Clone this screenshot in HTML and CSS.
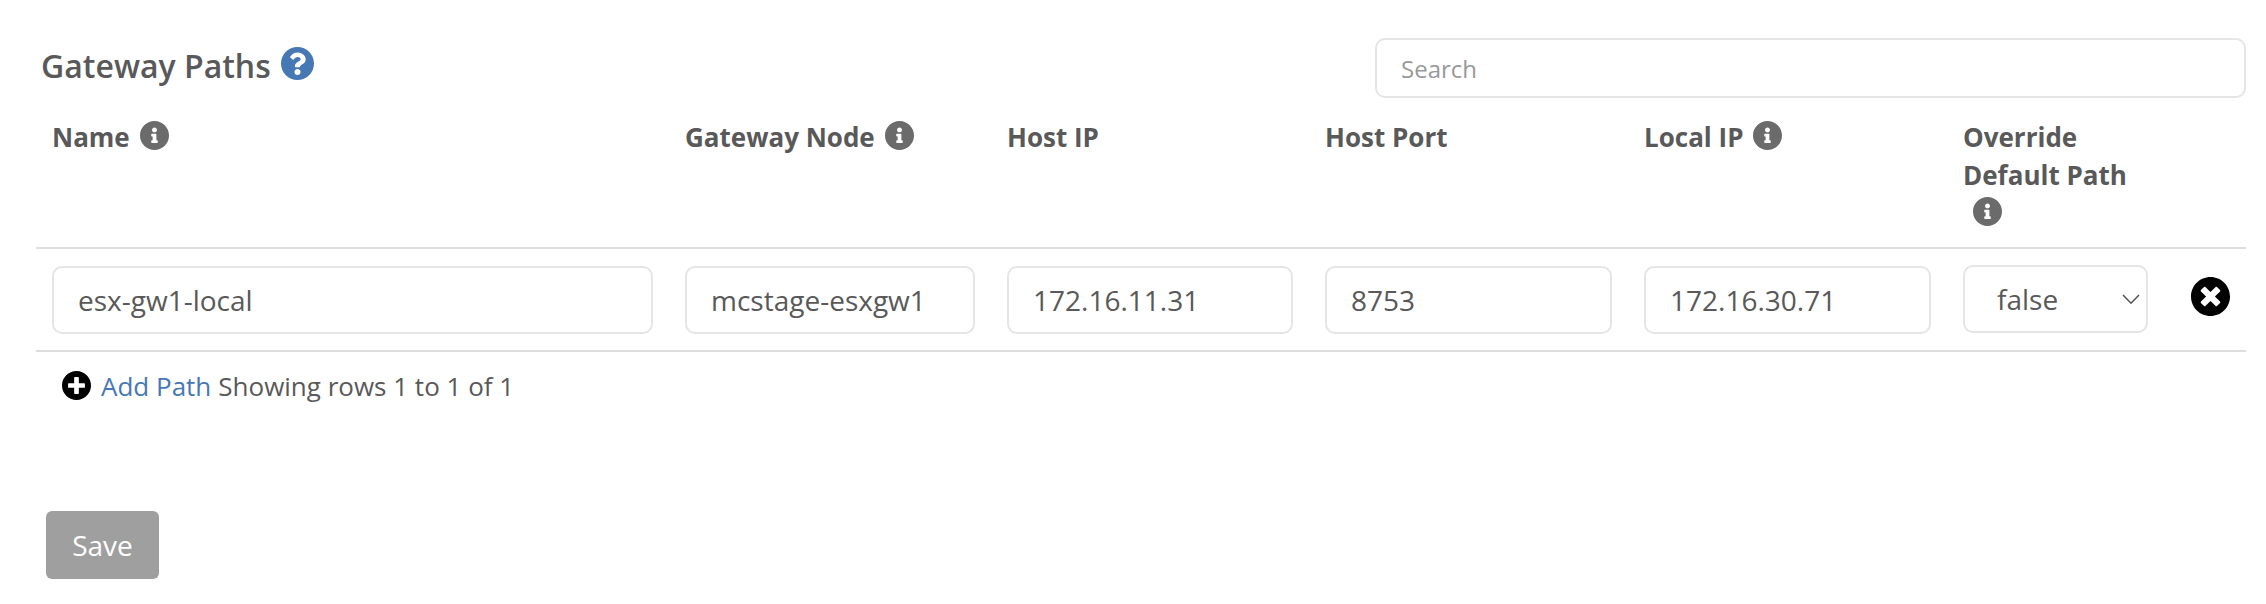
FILE: index.html
```html
<!DOCTYPE html>
<html lang="en">
<head>
<meta charset="utf-8">
<title>Gateway Paths</title>
<link rel="stylesheet" href="styles.css">
</head>
<body>
<svg class="sprite" aria-hidden="true">
  <symbol id="info" viewBox="8 8 496 496"><path d="M256 8C119.043 8 8 119.083 8 256c0 136.997 111.043 248 248 248s248-111.003 248-248C504 119.083 392.957 8 256 8zm0 110c23.196 0 42 18.804 42 42s-18.804 42-42 42-42-18.804-42-42 18.804-42 42-42zm56 254c0 6.627-5.373 12-12 12h-88c-6.627 0-12-5.373-12-12v-24c0-6.627 5.373-12 12-12h12v-64h-12c-6.627 0-12-5.373-12-12v-24c0-6.627 5.373-12 12-12h64c6.627 0 12 5.373 12 12v100h12c6.627 0 12 5.373 12 12v24z"/></symbol>
  <symbol id="question" viewBox="8 8 496 496"><path d="M504 256c0 136.997-111.043 248-248 248S8 392.997 8 256C8 119.083 119.043 8 256 8s248 111.083 248 248zM262.655 90c-54.497 0-89.255 22.957-116.549 63.758-3.536 5.286-2.353 12.415 2.715 16.258l34.699 26.31c5.205 3.947 12.621 3.008 16.665-2.122 17.864-22.658 30.113-35.797 57.303-35.797 20.429 0 45.698 13.148 45.698 32.958 0 14.976-12.363 22.667-32.534 33.976C247.128 238.528 216 254.941 216 296v4c0 6.627 5.373 12 12 12h56c6.627 0 12-5.373 12-12v-1.333c0-28.462 83.186-29.647 83.186-106.667 0-58.002-60.165-102-116.531-102zM256 338c-25.365 0-46 20.635-46 46 0 25.364 20.635 46 46 46s46-20.636 46-46c0-25.364-20.635-46-46-46z"/></symbol>
  <symbol id="times" viewBox="8 8 496 496"><path d="M256 8C119 8 8 119 8 256s111 248 248 248 248-111 248-248S393 8 256 8zm121.6 313.1c4.7 4.7 4.7 12.3 0 17L338 377.6c-4.7 4.7-12.3 4.7-17 0L256 312l-65.1 65.6c-4.7 4.7-12.3 4.7-17 0L134.4 338c-4.7-4.7-4.7-12.3 0-17l65.6-65-65.6-65.1c-4.7-4.7-4.7-12.3 0-17l39.6-39.6c4.7-4.7 12.3-4.7 17 0l65 65.7 65.1-65.6c4.7-4.7 12.3-4.7 17 0l39.6 39.6c4.7 4.7 4.7 12.3 0 17L312 256l65.6 65.1z"/></symbol>
  <symbol id="plus" viewBox="8 8 496 496"><path d="M256 8C119 8 8 119 8 256s111 248 248 248 248-111 248-248S393 8 256 8zm144 276c0 6.6-5.4 12-12 12h-92v92c0 6.6-5.4 12-12 12h-56c-6.6 0-12-5.4-12-12v-92h-92c-6.6 0-12-5.4-12-12v-56c0-6.6 5.4-12 12-12h92v-92c0-6.6 5.4-12 12-12h56c6.6 0 12 5.4 12 12v92h92c6.6 0 12 5.4 12 12v56z"/></symbol>
</svg>
<main class="panel">
  <header class="toolbar">
    <h1 class="title">Gateway Paths <svg class="help"><use href="#question"/></svg></h1>
    <input class="search" type="text" placeholder="Search">
  </header>
  <section class="table">
    <div class="row head">
      <div class="cell">Name<svg class="info"><use href="#info"/></svg></div>
      <div class="cell">Gateway Node<svg class="info"><use href="#info"/></svg></div>
      <div class="cell">Host IP</div>
      <div class="cell">Host Port</div>
      <div class="cell">Local IP<svg class="info"><use href="#info"/></svg></div>
      <div class="cell">Override Default Path <svg class="info"><use href="#info"/></svg></div>
      <div class="cell"></div>
    </div>
    <div class="row body">
      <div class="cell"><input class="field" type="text" value="esx-gw1-local"></div>
      <div class="cell"><input class="field" type="text" value="mcstage-esxgw1"></div>
      <div class="cell"><input class="field" type="text" value="172.16.11.31"></div>
      <div class="cell"><input class="field" type="text" value="8753"></div>
      <div class="cell"><input class="field" type="text" value="172.16.30.71"></div>
      <div class="cell select">
        <select class="field picker"><option>false</option><option>true</option></select>
        <svg class="chevron" viewBox="0 0 18 11"><path d="M1 1l8 8.2L17 1"/></svg>
      </div>
      <div class="cell remove"><svg class="times"><use href="#times"/></svg></div>
    </div>
  </section>
  <div class="footer"><svg class="plus"><use href="#plus"/></svg><a class="add">Add Path</a><span>Showing rows 1 to 1 of 1</span></div>
  <button class="save" type="button">Save</button>
</main>
</body>
</html>
```

FILE: styles.css
```css
* { box-sizing: border-box; }
body {
  margin: 0;
  background: #fff;
  color: #595959;
  font-family: "Open Sans", sans-serif;
  font-size: 26px;
}
svg { fill: currentColor; flex: none; }
.sprite { display: none; }
.panel { padding: 38px 20px 0 36px; }
.toolbar {
  display: flex;
  justify-content: space-between;
  height: 60px;
}
.title {
  display: flex;
  align-items: center;
  gap: 10px;
  margin: 0;
  padding-left: 5px;
  height: 55px;
  font-size: 32px;
  font-weight: 600;
}
.help { width: 33px; height: 33px; margin-top: -4px; color: #4678b6; }
.search {
  width: 871px;
  height: 60px;
  padding: 0 24px;
  border: 2px solid #e5e5e5;
  border-radius: 10px;
  font: 24px "Open Sans", sans-serif;
}
.search::placeholder { color: #999; opacity: 1; }
.row {
  display: grid;
  grid-template-columns: 633px 322px 318px 319px 319px 217px 82px;
  border-bottom: 2px solid #ddd;
}
.cell { padding: 0 16px; }
.head {
  height: 151px;
  padding-top: 20px;
  line-height: 38px;
  font-weight: 700;
}
.info {
  width: 29px;
  height: 29px;
  margin-left: 10px;
  vertical-align: -3px;
  color: #6b6b6b;
}
.body { height: 103px; padding-top: 17px; }
.field {
  display: block;
  width: 100%;
  height: 68px;
  padding: 0 24px;
  border: 2px solid #e5e5e5;
  border-radius: 10px;
  background: #fff;
  color: #595959;
  font: 28px "Open Sans", sans-serif;
}
.select { position: relative; }
.picker { margin-top: -1px; padding: 0 32px; appearance: none; }
.chevron {
  position: absolute;
  top: 28px;
  right: 24px;
  width: 18px;
  height: 11px;
  fill: none;
  stroke: #555;
  stroke-width: 1.6;
}
.remove { padding: 11px 0 0 27px; color: #000; }
.times { display: block; width: 39px; height: 39px; }
.footer {
  display: flex;
  align-items: center;
  height: 38px;
  margin-top: 15px;
  padding-left: 26px;
}
.plus { width: 29px; height: 29px; margin: -2px 10px 0 0; color: #000; }
.add { margin-right: 7px; color: #4678b6; }
.save {
  display: block;
  width: 113px;
  height: 68px;
  margin: 106px 0 0 10px;
  padding: 0;
  border: 0;
  border-radius: 6px;
  background: #9f9f9f;
  color: #fff;
  font: 28px "Open Sans", sans-serif;
}
```
